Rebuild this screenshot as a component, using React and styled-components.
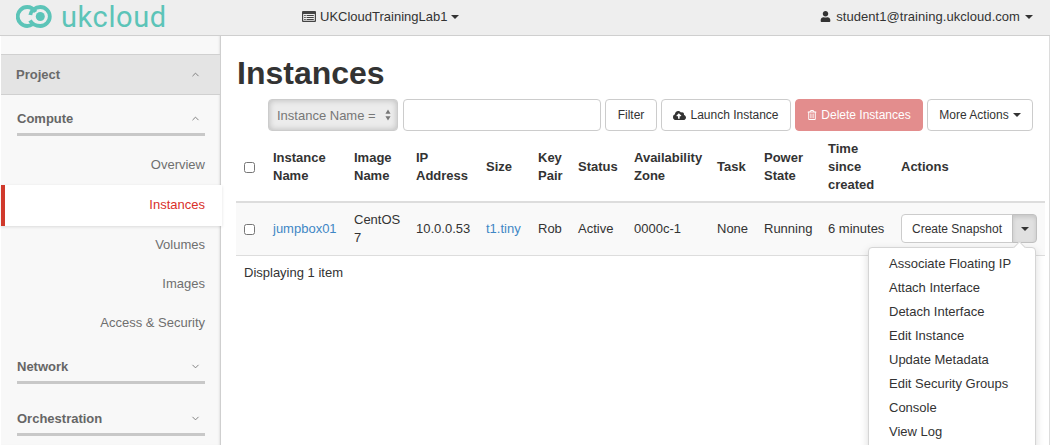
import React from "react";
import styled, { createGlobalStyle } from "styled-components";
import { FaUser, FaCloudUploadAlt, FaRegTrashAlt } from "react-icons/fa";
import { FiChevronUp, FiChevronDown } from "react-icons/fi";

const GlobalStyle = createGlobalStyle`
  html, body {
    margin: 0;
    padding: 0;
    height: 445px;
    overflow: hidden;
    background: #fff;
    font-family: "Liberation Sans", Arial, sans-serif;
    font-size: 13px;
    color: #333;
  }
  * { box-sizing: border-box; }
`;

const columns = [29, 81, 62, 70, 52, 40, 56, 83, 47, 64, 73, 152];

const menuItems = [
  "Associate Floating IP",
  "Attach Interface",
  "Detach Interface",
  "Edit Instance",
  "Update Metadata",
  "Edit Security Groups",
  "Console",
  "View Log",
];

const Logo = () => (
  <LogoMark viewBox="0 0 36 23" aria-hidden="true">
    <g fill="none" stroke="#5cc4b8" strokeWidth="3.8">
      <path d="M19.5 7C17.5 3.8 14.500 2 11.200 2a9.500 9.500 0 0 0 0 19c2 0 3.800-.6 5.300-1.700" />
      <path d="M14 15.500c2 3.400 6 5.500 10.300 5.500a9.500 9.500 0 0 0 0-19c-5.300 0-9.300 3.600-10 8" />
    </g>
    <circle cx="24.300" cy="11.500" r="4.500" fill="#5cc4b8" />
  </LogoMark>
);

const ProjectIcon = () => (
  <TenantIcon viewBox="0 0 14 11" aria-hidden="true">
    <path
      fillRule="evenodd"
      d="M1 0h12a1 1 0 0 1 1 1v9a1 1 0 0 1-1 1H1a1 1 0 0 1-1-1V1a1 1 0 0 1 1-1zm.2 3v6.800h11.600V3zM2.200 4h1.500v1H2.200zm2.400 0h7.200v1H4.600zM2.200 6h1.500v1H2.200zm2.400 0h7.200v1H4.600zM2.200 8h1.500v1H2.200zm2.400 0h7.200v1H4.600z"
    />
  </TenantIcon>
);

const SortArrows = () => (
  <SortIcon viewBox="0 0 7 14" aria-hidden="true">
    <path d="M3.500 0.500 6.500 5.500H0.500zM3.500 13.500 0.500 8.500H6.500z" />
  </SortIcon>
);

const App = () => {
  return (
    <Page>
      <GlobalStyle />
      <TopBar>
        <Brand>
          <Logo />
          <BrandName>ukcloud</BrandName>
        </Brand>
        <ProjectPicker>
          <ProjectIcon />
          UKCloudTrainingLab1
          <Caret />
        </ProjectPicker>
        <UserMenu>
          <FaUser size={11} />
          student1@training.ukcloud.com
          <Caret />
        </UserMenu>
      </TopBar>

      <Body>
        <Sidebar>
          <DashboardRow>
            Project
            <FiChevronUp size={11} />
          </DashboardRow>
          <GroupRow $mt={11}>
            Compute
            <FiChevronUp size={11} />
          </GroupRow>
          <NavList>
            <NavItem>Overview</NavItem>
            <NavItem $active>Instances</NavItem>
            <NavItem>Volumes</NavItem>
            <NavItem>Images</NavItem>
            <NavItem>Access &amp; Security</NavItem>
          </NavList>
          <GroupRow $mt={11}>
            Network
            <FiChevronDown size={11} />
          </GroupRow>
          <GroupRow $mt={22}>
            Orchestration
            <FiChevronDown size={11} />
          </GroupRow>
        </Sidebar>

        <Main>
          <Title>Instances</Title>
          <Toolbar>
            <FilterSelect>
              Instance Name =
              <SortArrows />
            </FilterSelect>
            <FilterInput />
            <Button $w={52}>Filter</Button>
            <Button $w={130}>
              <FaCloudUploadAlt size={13} />
              Launch Instance
            </Button>
            <DangerButton $w={128}>
              <FaRegTrashAlt size={10} />
              Delete Instances
            </DangerButton>
            <Button $w={106}>
              More Actions
              <Caret />
            </Button>
          </Toolbar>

          <Table>
            <colgroup>
              {columns.map((w, i) => (
                <col key={i} style={{ width: w }} />
              ))}
            </colgroup>
            <thead>
              <tr>
                <Th>
                  <Check type="checkbox" />
                </Th>
                <Th>Instance Name</Th>
                <Th>Image Name</Th>
                <Th>IP Address</Th>
                <Th>Size</Th>
                <Th>Key Pair</Th>
                <Th>Status</Th>
                <Th>Availability Zone</Th>
                <Th>Task</Th>
                <Th>Power State</Th>
                <Th>Time since created</Th>
                <Th>Actions</Th>
              </tr>
            </thead>
            <tbody>
              <tr>
                <Td>
                  <Check type="checkbox" />
                </Td>
                <Td>
                  <TableLink>jumpbox01</TableLink>
                </Td>
                <Td>CentOS 7</Td>
                <Td>10.0.0.53</Td>
                <Td>
                  <TableLink>t1.tiny</TableLink>
                </Td>
                <Td>Rob</Td>
                <Td>Active</Td>
                <Td>0000c-1</Td>
                <Td>None</Td>
                <Td>Running</Td>
                <Td>6 minutes</Td>
                <Td>
                  <ActionGroup>
                    <SnapshotButton $w={112}>Create Snapshot</SnapshotButton>
                    <ToggleButton $w={25}>
                      <Caret />
                    </ToggleButton>
                    <Menu>
                      {menuItems.map((item) => (
                        <MenuItem key={item}>{item}</MenuItem>
                      ))}
                    </Menu>
                  </ActionGroup>
                </Td>
              </tr>
            </tbody>
          </Table>
          <Footer>Displaying 1 item</Footer>
        </Main>
      </Body>
    </Page>
  );
};

export default App;

const Page = styled.div`
  width: 1051px;
  height: 445px;
  overflow: hidden;
`;

const TopBar = styled.header`
  display: flex;
  align-items: center;
  width: 1050px;
  height: 36px;
  padding: 0 17px 2px 16px;
  background: #eeeeee;
  border-bottom: 1px solid #cfcfcf;
`;

const Brand = styled.div`
  display: flex;
  align-items: center;
  gap: 9px;
  width: 286px;
`;

const LogoMark = styled.svg`
  width: 36px;
  height: 23px;
`;

const BrandName = styled.span`
  margin-top: 1px;
  font-family: Roboto, sans-serif;
  font-size: 29px;
  line-height: 33px;
  letter-spacing: 0.6px;
  color: #5cc4b8;
`;

const ProjectPicker = styled.div`
  display: flex;
  align-items: center;
  gap: 4px;
  color: #333;
`;

const TenantIcon = styled.svg`
  width: 14px;
  height: 11px;
  fill: #444;
`;

const UserMenu = styled.div`
  display: flex;
  align-items: center;
  gap: 5px;
  margin-left: auto;
  letter-spacing: 0.05px;
  color: #333;
`;

const Caret = styled.span`
  display: inline-block;
  width: 0;
  height: 0;
  border-top: 4px solid currentColor;
  border-left: 4px solid transparent;
  border-right: 4px solid transparent;
`;

const Body = styled.div`
  display: flex;
  height: 409px;
  border-right: 1px solid #dcdcdc;
  margin-right: 1px;
`;

const Sidebar = styled.nav`
  flex: none;
  width: 220px;
  margin-left: 1px;
  padding-top: 18px;
  background: #f8f8f8;
  border-right: 1px solid #cfcfcf;
  box-shadow: inset -2px 0 2px -1px #e4e4e4;
`;

const DashboardRow = styled.div`
  display: flex;
  align-items: center;
  justify-content: space-between;
  height: 41px;
  padding: 0 19px 0 15px;
  background: #e4e4e4;
  border-top: 1px solid #d0d0d0;
  border-bottom: 1px solid #d0d0d0;
  font-weight: 700;
  color: #6a6a6a;
  svg {
    color: #777;
  }
`;

const GroupRow = styled.div`
  display: flex;
  align-items: center;
  justify-content: space-between;
  height: 30px;
  margin: ${(p) => p.$mt}px 15px 0 16px;
  padding: 0 4px 2px 0;
  border-bottom: 3px solid #c8c8c8;
  font-weight: 700;
  color: #666;
  svg {
    color: #777;
  }
`;

const NavList = styled.div`
  margin-top: 10px;
`;

const NavItem = styled.div`
  position: relative;
  display: flex;
  align-items: center;
  justify-content: flex-end;
  height: ${(p) => (p.$active ? "41px" : "39px")};
  margin-right: ${(p) => (p.$active ? "-2px" : "0")};
  padding: 0 ${(p) => (p.$active ? "17px" : "15px")} 2px 0;
  color: ${(p) => (p.$active ? "#d9302a" : "#6f6f6f")};
  background: ${(p) => (p.$active ? "#fff" : "transparent")};
  border-left: ${(p) => (p.$active ? "4px solid #d0392b" : "none")};
  box-shadow: ${(p) => (p.$active ? "0 1px 3px rgba(0, 0, 0, 0.12)" : "none")};
`;

const Main = styled.main`
  flex: 1;
  min-width: 0;
  padding: 0 0 0 15px;
`;

const Title = styled.h1`
  margin: 17px 0 0 1px;
  font-size: 32px;
  line-height: 40px;
  font-weight: 700;
  color: #333;
`;

const Toolbar = styled.div`
  display: flex;
  gap: 4px;
  height: 32px;
  margin: 6px 0 0 32px;
`;

const Button = styled.button`
  display: flex;
  flex: none;
  align-items: center;
  justify-content: center;
  gap: 4px;
  width: ${(p) => p.$w}px;
  height: 32px;
  padding: 0;
  background: #fff;
  border: 1px solid #cccccc;
  border-radius: 4px;
  font-family: inherit;
  font-size: 12px;
  color: #333;
  white-space: nowrap;
`;

const DangerButton = styled(Button)`
  background: #e38d8d;
  border-color: #e38d8d;
  color: #fff;
`;

const FilterSelect = styled.div`
  display: flex;
  flex: none;
  align-items: center;
  justify-content: space-between;
  width: 130px;
  height: 32px;
  padding: 0 6px 0 8px;
  border: 1px solid #cccccc;
  border-radius: 4px;
  background: #ececec;
  box-shadow: inset 0 0 6px rgba(0, 0, 0, 0.22);
  color: #777;
`;

const SortIcon = styled.svg`
  width: 6px;
  height: 12px;
  fill: #777;
`;

const FilterInput = styled.input`
  flex: none;
  width: 198px;
  height: 32px;
  margin-left: 1px;
  border: 1px solid #cccccc;
  border-radius: 4px;
  background: #fff;
`;

const Table = styled.table`
  width: 809px;
  margin: 5px 0 0;
  table-layout: fixed;
  border-collapse: collapse;
`;

const Th = styled.th`
  height: 66px;
  padding: 0 8px 4px;
  border-bottom: 2px solid #dddddd;
  text-align: left;
  vertical-align: middle;
  font-weight: 700;
  line-height: 18px;
`;

const Td = styled.td`
  height: 53px;
  padding: 0 8px;
  background: #f9f9f9;
  border-bottom: 1px solid #dddddd;
  vertical-align: middle;
  line-height: 18px;
`;

const Check = styled.input`
  display: block;
  width: 11px;
  height: 11px;
  margin: 2px 0 0;
`;

const TableLink = styled.a`
  color: #3f87c5;
`;

const ActionGroup = styled.div`
  position: relative;
  display: flex;
  height: 29px;
`;

const SnapshotButton = styled(Button)`
  height: 29px;
  border-radius: 4px 0 0 4px;
`;

const ToggleButton = styled(Button)`
  height: 29px;
  margin-left: -1px;
  background: #e0e0e0;
  border-color: #c0c0c0;
  border-radius: 0 4px 4px 0;
  box-shadow: inset 0 2px 4px rgba(0, 0, 0, 0.12);
`;

const Menu = styled.div`
  position: absolute;
  top: 33px;
  right: 1px;
  width: 168px;
  padding: 4px 0 20px;
  background: #fff;
  border: 1px solid #d5d5d5;
  border-radius: 4px;
  box-shadow: 0 3px 8px rgba(0, 0, 0, 0.15);
  z-index: 2;
  &::before {
    content: "";
    position: absolute;
    top: -5px;
    right: 11px;
    width: 8px;
    height: 8px;
    background: #fff;
    border-top: 1px solid #d5d5d5;
    border-left: 1px solid #d5d5d5;
    transform: rotate(45deg);
  }
`;

const MenuItem = styled.div`
  padding: 0 20px 0 19px;
  margin-left: 1px;
  line-height: 24px;
  color: #333;
  white-space: nowrap;
`;

const Footer = styled.div`
  padding: 8px 8px;
  line-height: 18px;
`;
